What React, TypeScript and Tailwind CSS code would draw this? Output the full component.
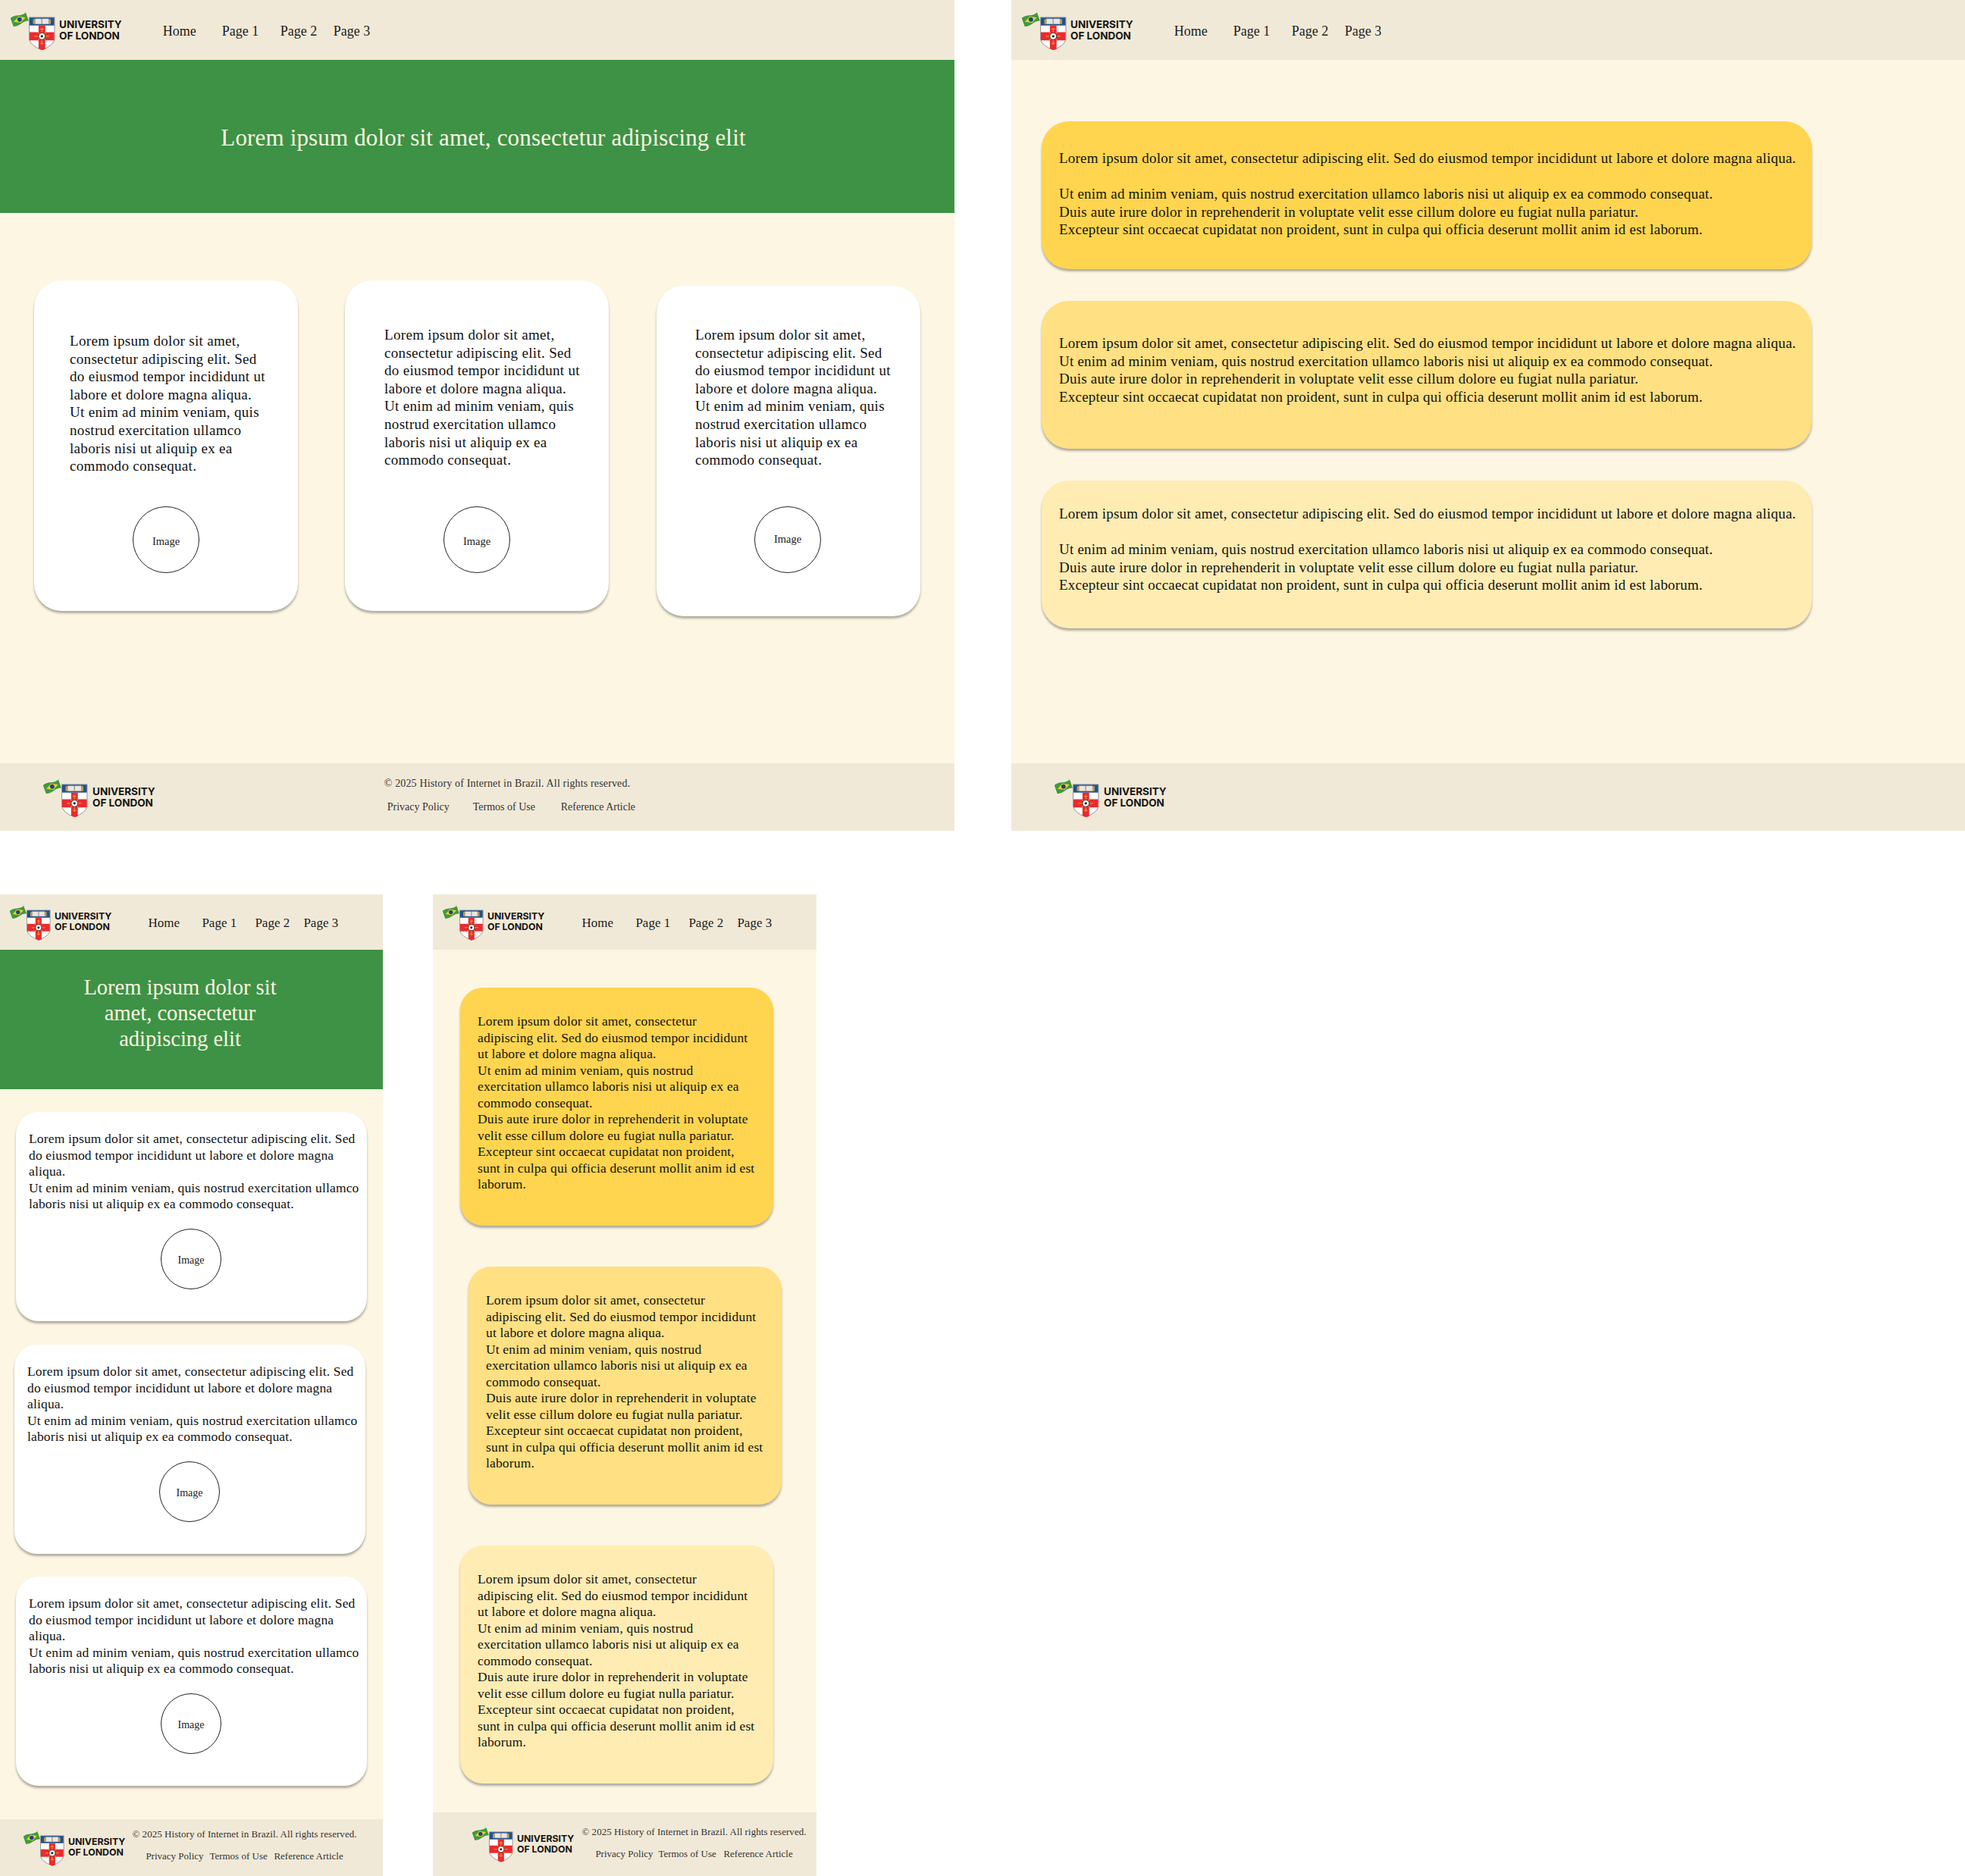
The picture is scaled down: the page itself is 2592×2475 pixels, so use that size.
const short = ["Lorem ipsum dolor sit amet,", "consectetur adipiscing elit. Sed", "do eiusmod tempor incididunt ut", "labore et dolore magna aliqua.", "Ut enim ad minim veniam, quis", "nostrud exercitation ullamco", "laboris nisi ut aliquip ex ea", "commodo consequat."];
const mid = ["Lorem ipsum dolor sit amet, consectetur adipiscing elit. Sed", "do eiusmod tempor incididunt ut labore et dolore magna", "aliqua.", "Ut enim ad minim veniam, quis nostrud exercitation ullamco", "laboris nisi ut aliquip ex ea commodo consequat."];
const wide = ["Lorem ipsum dolor sit amet, consectetur adipiscing elit. Sed do eiusmod tempor incididunt ut labore et dolore magna aliqua.", "Ut enim ad minim veniam, quis nostrud exercitation ullamco laboris nisi ut aliquip ex ea commodo consequat.", "Duis aute irure dolor in reprehenderit in voluptate velit esse cillum dolore eu fugiat nulla pariatur.", "Excepteur sint occaecat cupidatat non proident, sunt in culpa qui officia deserunt mollit anim id est laborum."];
const tall = ["Lorem ipsum dolor sit amet, consectetur", "adipiscing elit. Sed do eiusmod tempor incididunt", "ut labore et dolore magna aliqua.", "Ut enim ad minim veniam, quis nostrud", "exercitation ullamco laboris nisi ut aliquip ex ea", "commodo consequat.", "Duis aute irure dolor in reprehenderit in voluptate", "velit esse cillum dolore eu fugiat nulla pariatur.", "Excepteur sint occaecat cupidatat non proident,", "sunt in culpa qui officia deserunt mollit anim id est", "laborum."];

const bodyLg = "text-[19px] tracking-[0.22px] leading-[23.6px] text-[#111]";
const bodyCard = "text-[19px] tracking-[0.32px] leading-[23.6px] text-[#111]";
const bodySm = "text-[17.5px] tracking-[0.16px] leading-[21.55px] text-[#111]";

function Lines({ items, className }: { items: string[]; className: string }) {
  return (
    <p className={className}>
      {items.map((l, i) => (
        <span key={i} className={l === "" ? "block h-[1lh]" : "block whitespace-nowrap"}>{l}</span>
      ))}
    </p>
  );
}

function Crest({ className }: { className: string }) {
  return (
    <svg viewBox="0 0 60 52" className={className}>
      <g transform="rotate(-20 12 11)">
        <path d="M23 1 V4" stroke="#bbb" strokeWidth="0.6" />
        <path d="M1 5 Q6 3 12 5 T23 5 L23 17 Q18 15 12 17 T1 17 Z" fill="#3f9a3f" />
        <path d="M12 6.500 L20.500 11 L12 15.500 L3.500 11 Z" fill="#e6d32a" />
        <circle cx="12" cy="11" r="3" fill="#24408f" />
      </g>
      <path d="M25 8 H59 V38 Q57 46 42 52 Q27 46 25 38 Z" fill="#fff" stroke="#777" strokeWidth="0.8" />
      <rect x="25.400" y="8.400" width="33.200" height="10.600" fill="#20508f" />
      <rect x="30" y="10.500" width="24" height="6.500" rx="1" fill="#c29a45" />
      <rect x="33" y="10" width="8.500" height="7" fill="#e6e6e6" stroke="#999" strokeWidth="0.4" />
      <rect x="42.500" y="10" width="8.500" height="7" fill="#e6e6e6" stroke="#999" strokeWidth="0.4" />
      <rect x="25.400" y="28" width="33.200" height="11" fill="#ea2a30" />
      <path d="M37.500 19 H46.500 V51 L42 52 L37.500 50 Z" fill="#ea2a30" />
      <g stroke="#f0a030" strokeWidth="1">
        <path d="M32 33.500 H52 M42 22 V45 M36 27.500 L48 39.500 M48 27.500 L36 39.500" />
      </g>
      <path d="M39.500 24 H44.500 M39.500 43 H44.500" stroke="#f0a030" strokeWidth="1" />
      <circle cx="42" cy="33.500" r="4.500" fill="#fff" stroke="#333" strokeWidth="1" />
      <circle cx="42" cy="33.500" r="1.700" fill="#222" />
    </svg>
  );
}

function LogoLg({ textGap }: { textGap: string }) {
  return (
    <div className="flex items-center shrink-0">
      <Crest className="w-[59px] h-[51px] mt-[1px]" />
      <div className={`${textGap} font-['Inter',sans-serif] font-bold text-[13.5px] leading-[15px] text-[#141414] whitespace-nowrap`}>
        <div>UNIVERSITY</div>
        <div>OF LONDON</div>
      </div>
    </div>
  );
}

function LogoSm() {
  return (
    <div className="flex items-center shrink-0">
      <Crest className="w-[54px] h-[48px]" />
      <div className="ml-[5px] -mt-[1px] font-['Inter',sans-serif] font-bold text-[12.3px] leading-[14px] text-[#141414] whitespace-nowrap">
        <div>UNIVERSITY</div>
        <div>OF LONDON</div>
      </div>
    </div>
  );
}

function NavLg() {
  return (
    <nav className="flex ml-[54px] mt-[3px] text-[18px] text-[#1c1c1c]">
      <a className="w-[78px]">Home</a>
      <a className="w-[77px]">Page 1</a>
      <a className="w-[70px]">Page 2</a>
      <a>Page 3</a>
    </nav>
  );
}

function NavSm({ gapLeft }: { gapLeft: string }) {
  return (
    <nav className={`flex mt-[2px] text-[17px] text-[#1c1c1c] ${gapLeft}`}>
      <a className="w-[71px]">Home</a>
      <a className="w-[70px]">Page 1</a>
      <a className="w-[64px]">Page 2</a>
      <a>Page 3</a>
    </nav>
  );
}

function App() {
  return (
    <div className="w-[2592px] h-[2475px] bg-white font-['Liberation_Serif',serif] overflow-hidden">
      <div className="flex justify-between h-[1180px] items-start">
        {/* Desktop home */}
        <section className="w-[1259px] h-[1096px] flex flex-col bg-[#fdf6e3]">
          <header className="h-[79px] shrink-0 bg-[#f1e9d7] flex items-center pl-[14px]">
            <LogoLg textGap="ml-[5px]" />
            <NavLg />
          </header>
          <div className="h-[202px] shrink-0 bg-[#3d9245] flex items-center justify-center pl-[16px] pt-[4px] text-[31px] tracking-[0.16px] text-[#fdf6e3]">
            Lorem ipsum dolor sit amet, consectetur adipiscing elit
          </div>
          <main className="flex-1 flex pl-[45px]">
            <article className="w-[348px] h-[436px] mt-[89px] rounded-[36px] bg-white shadow-[0_3px_3px_rgba(0,0,0,0.3)] pt-[68px] pl-[47px]">
              <Lines items={short} className={bodyCard} />
              <div className="w-[88px] h-[88px] mt-[41px] ml-[83px] rounded-full border border-[#222] flex items-center justify-center text-[14.5px] pt-[6px] text-[#222]">Image</div>
            </article>
            <article className="w-[348px] h-[436px] mt-[89px] ml-[62px] rounded-[36px] bg-white shadow-[0_3px_3px_rgba(0,0,0,0.3)] pt-[60px] pl-[52px]">
              <Lines items={short} className={bodyCard} />
              <div className="w-[88px] h-[88px] mt-[49px] ml-[78px] rounded-full border border-[#222] flex items-center justify-center text-[14.5px] pt-[6px] text-[#222]">Image</div>
            </article>
            <article className="w-[348px] h-[436px] mt-[96px] ml-[63px] rounded-[36px] bg-white shadow-[0_3px_3px_rgba(0,0,0,0.3)] pt-[53px] pl-[51px]">
              <Lines items={short} className={bodyCard} />
              <div className="w-[88px] h-[88px] mt-[49px] ml-[78px] rounded-full border border-[#222] flex items-center justify-center text-[14.5px] text-[#222]">Image</div>
            </article>
          </main>
          <footer className="h-[89px] shrink-0 bg-[#f1e9d7] flex items-center pl-[57px]">
            <LogoLg textGap="ml-[6px]" />
            <div className="ml-[302px] -mt-[6px] text-[#333]">
              <div className="text-[14px] tracking-[0.15px] whitespace-nowrap">© 2025 History of Internet in Brazil. All rights reserved.</div>
              <div className="flex text-[14px] mt-[10px] ml-[4px] whitespace-nowrap">
                <a className="w-[113px]">Privacy Policy</a>
                <a className="w-[116px]">Termos of Use</a>
                <a>Reference Article</a>
              </div>
            </div>
          </footer>
        </section>

        {/* Desktop page */}
        <section className="w-[1258px] h-[1096px] flex flex-col bg-[#fdf6e3]">
          <header className="h-[79px] shrink-0 bg-[#f1e9d7] flex items-center pl-[14px]">
            <LogoLg textGap="ml-[5px]" />
            <NavLg />
          </header>
          <main className="flex-1 flex flex-col pl-[40px] pt-[81px]">
            <article className="w-[1016px] h-[195px] rounded-[36px] bg-[#ffd54f] shadow-[0_3px_3px_rgba(0,0,0,0.3)] pt-[37px] pl-[23px]">
              <Lines items={[wide[0], "", wide[1], wide[2], wide[3]]} className={bodyLg} />
            </article>
            <article className="w-[1016px] h-[195px] mt-[42px] rounded-[36px] bg-[#ffe082] shadow-[0_3px_3px_rgba(0,0,0,0.3)] pt-[44px] pl-[23px]">
              <Lines items={wide} className={bodyLg} />
            </article>
            <article className="w-[1016px] h-[195px] mt-[42px] rounded-[36px] bg-[#ffecb3] shadow-[0_3px_3px_rgba(0,0,0,0.3)] pt-[32px] pl-[23px]">
              <Lines items={[wide[0], "", wide[1], wide[2], wide[3]]} className={bodyLg} />
            </article>
          </main>
          <footer className="h-[89px] shrink-0 bg-[#f1e9d7] flex items-center pl-[57px]">
            <LogoLg textGap="ml-[6px]" />
          </footer>
        </section>
      </div>

      <div className="flex h-[1295px] gap-[66px]">
        {/* Mobile home */}
        <section className="w-[505px] h-full flex flex-col bg-[#fdf6e3]">
          <header className="h-[73px] shrink-0 bg-[#f1e9d7] flex items-center pl-[13px]">
            <LogoSm />
            <NavSm gapLeft="ml-[48px]" />
          </header>
          <div className="h-[184px] shrink-0 bg-[#3d9245] pt-[33px] pr-[30px] text-center text-[28.5px] leading-[34px] text-[#fdf6e3]">
            <div>Lorem ipsum dolor sit</div>
            <div>amet, consectetur</div>
            <div>adipiscing elit</div>
          </div>
          <main className="flex-1 flex flex-col">
            <article className="w-[463px] h-[276px] ml-[21px] mt-[30px] rounded-[30px] bg-white shadow-[0_3px_3px_rgba(0,0,0,0.3)] pt-[25px] pl-[17px]">
              <Lines items={mid} className={bodySm} />
              <div className="w-[80px] h-[80px] mt-[21px] ml-[174px] rounded-full border border-[#222] flex items-center justify-center text-[14px] pt-[3px] text-[#222]">Image</div>
            </article>
            <article className="w-[463px] h-[276px] ml-[19px] mt-[31px] rounded-[30px] bg-white shadow-[0_3px_3px_rgba(0,0,0,0.3)] pt-[25px] pl-[17px]">
              <Lines items={mid} className={bodySm} />
              <div className="w-[80px] h-[80px] mt-[21px] ml-[174px] rounded-full border border-[#222] flex items-center justify-center text-[14px] pt-[3px] text-[#222]">Image</div>
            </article>
            <article className="w-[463px] h-[276px] ml-[21px] mt-[30px] rounded-[30px] bg-white shadow-[0_3px_3px_rgba(0,0,0,0.3)] pt-[25px] pl-[17px]">
              <Lines items={mid} className={bodySm} />
              <div className="w-[80px] h-[80px] mt-[21px] ml-[174px] rounded-full border border-[#222] flex items-center justify-center text-[14px] pt-[3px] text-[#222]">Image</div>
            </article>
          </main>
          <footer className="h-[75px] shrink-0 bg-[#f1e9d7] flex items-center pl-[31px]">
            <LogoSm />
            <div className="ml-[9px] -mt-[7px] text-[#333] whitespace-nowrap">
              <div className="text-[13px] tracking-[0.05px]">© 2025 History of Internet in Brazil. All rights reserved.</div>
              <div className="flex text-[13px] mt-[10px] ml-[18px]">
                <a className="w-[84px]">Privacy Policy</a>
                <a className="w-[85px]">Termos of Use</a>
                <a>Reference Article</a>
              </div>
            </div>
          </footer>
        </section>

        {/* Mobile page */}
        <section className="w-[506px] h-full flex flex-col bg-[#fdf6e3]">
          <header className="h-[73px] shrink-0 bg-[#f1e9d7] flex items-center pl-[13px]">
            <LogoSm />
            <NavSm gapLeft="ml-[49px]" />
          </header>
          <main className="flex-1 flex flex-col">
            <article className="w-[413px] h-[314px] ml-[36px] mt-[50px] rounded-[30px] bg-[#ffd54f] shadow-[0_3px_3px_rgba(0,0,0,0.3)] pt-[34px] pl-[23px]">
              <Lines items={tall} className={bodySm} />
            </article>
            <article className="w-[413px] h-[314px] ml-[47px] mt-[54px] rounded-[30px] bg-[#ffe082] shadow-[0_3px_3px_rgba(0,0,0,0.3)] pt-[34px] pl-[23px]">
              <Lines items={tall} className={bodySm} />
            </article>
            <article className="w-[413px] h-[314px] ml-[36px] mt-[54px] rounded-[30px] bg-[#ffecb3] shadow-[0_3px_3px_rgba(0,0,0,0.3)] pt-[34px] pl-[23px]">
              <Lines items={tall} className={bodySm} />
            </article>
          </main>
          <footer className="h-[84px] shrink-0 bg-[#f1e9d7] flex items-center pl-[52px]">
            <LogoSm />
            <div className="ml-[10px] -mt-[4px] text-[#333] whitespace-nowrap">
              <div className="text-[13px] tracking-[0.05px]">© 2025 History of Internet in Brazil. All rights reserved.</div>
              <div className="flex text-[13px] mt-[10px] ml-[18px]">
                <a className="w-[83px]">Privacy Policy</a>
                <a className="w-[86px]">Termos of Use</a>
                <a>Reference Article</a>
              </div>
            </div>
          </footer>
        </section>
      </div>
    </div>
  );
}

export default App;
